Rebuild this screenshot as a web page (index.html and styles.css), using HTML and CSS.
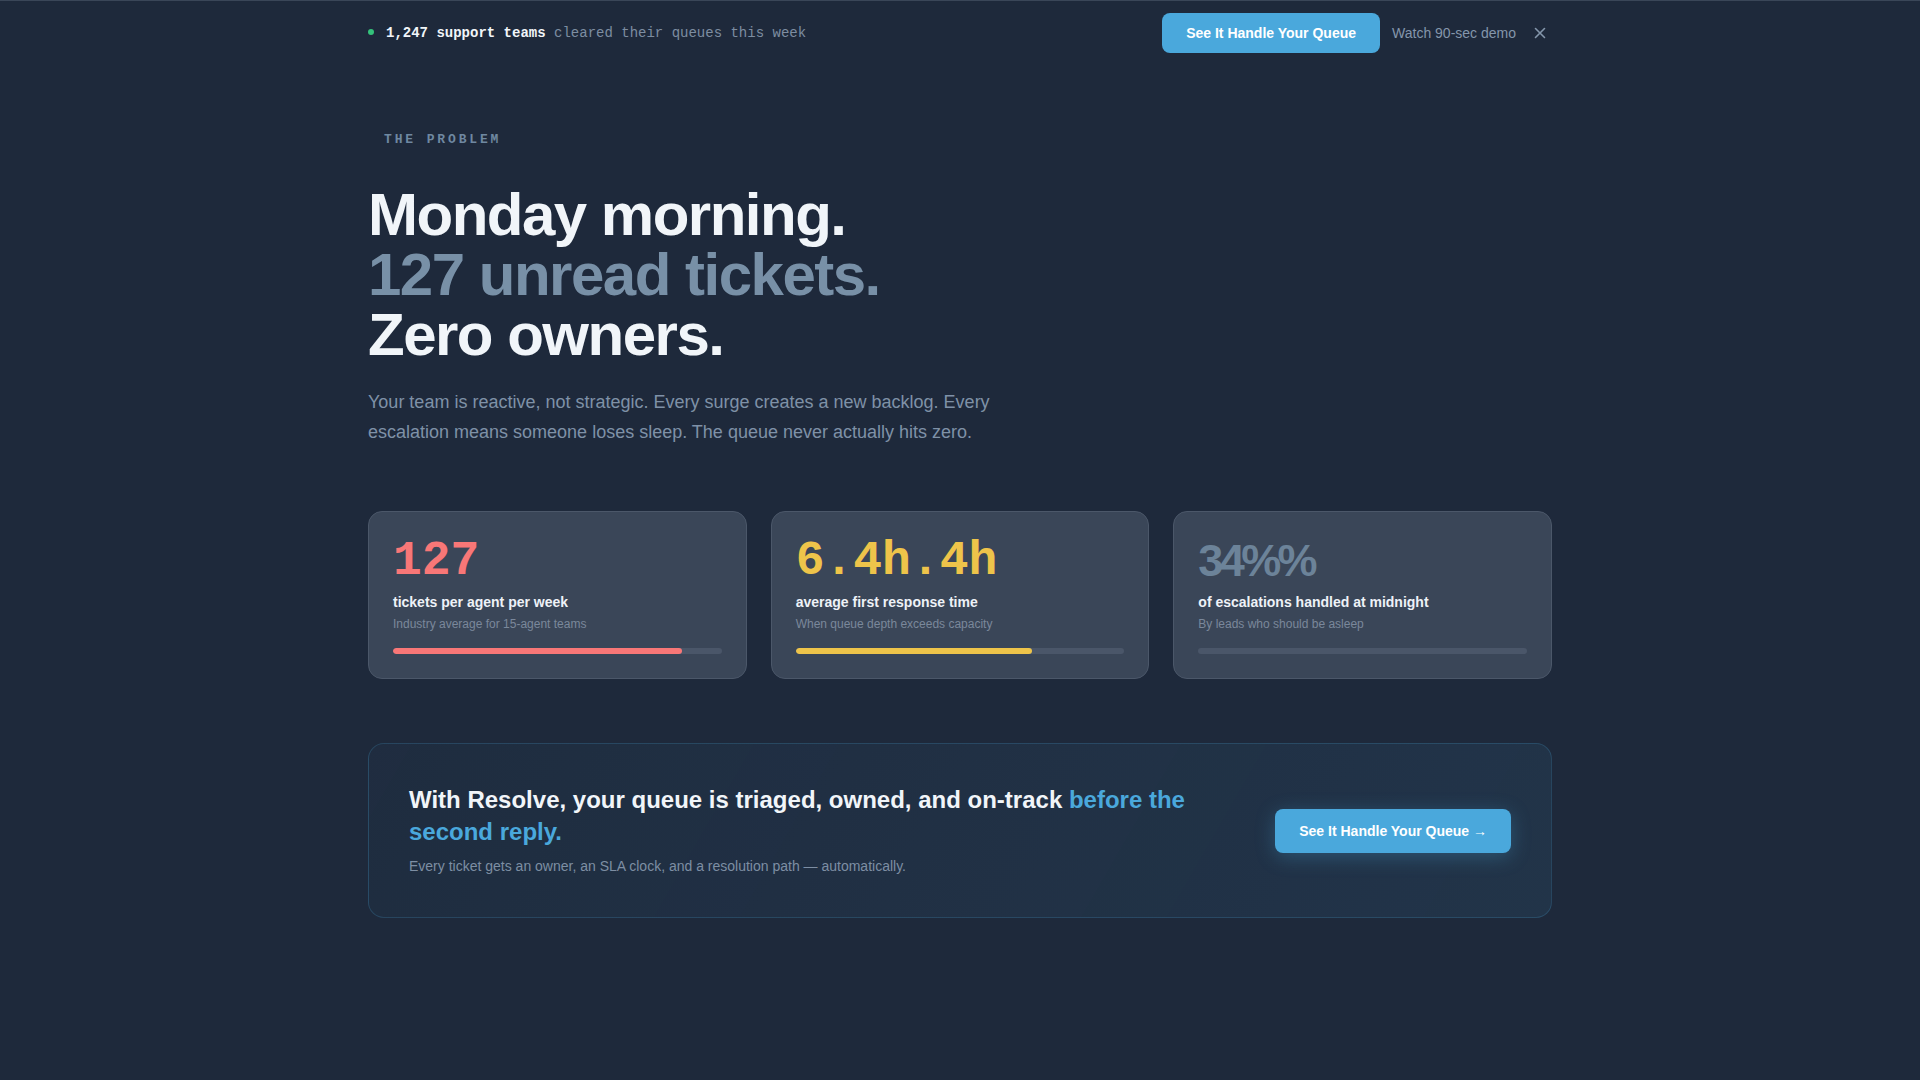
FILE: index.html
```html
<!DOCTYPE html>
<html lang="en">
<head>
    <meta charset="UTF-8">
    <title>Resolve - The Problem</title>
    <link rel="stylesheet" href="styles.css">
</head>
<body>

<div class="topbar">
    <div class="topbar-inner">
        <div class="proof"><span class="dot"></span><strong>1,247 support teams</strong> cleared their queues this week</div>
        <div class="topbar-actions">
            <a class="btn" href="#">See It Handle Your Queue</a>
            <a class="demo-link" href="#">Watch 90-sec demo</a>
            <button class="close" type="button" aria-label="Close">
                <svg width="12" height="12" viewBox="0 0 12 12">
                    <path d="M1.5 1.5 L10.5 10.5 M10.5 1.5 L1.5 10.5" stroke="currentColor" stroke-width="1.6" stroke-linecap="round"/>
                </svg>
            </button>
        </div>
    </div>
</div>

<section class="problem">
    <span class="eyebrow">The Problem</span>
    <h1 class="headline">
        Monday morning.<br>
        <span class="muted">127 unread tickets.</span><br>
        Zero owners.
    </h1>
    <p class="lead">Your team is reactive, not strategic. Every surge creates a new backlog. Every escalation means someone loses sleep. The queue never actually hits zero.</p>

    <div class="stats">
        <div class="stat">
            <div class="stat-value red">127</div>
            <div class="stat-label">tickets per agent per week</div>
            <div class="stat-note">Industry average for 15-agent teams</div>
            <div class="bar"><span class="fill red" style="width: 88%"></span></div>
        </div>
        <div class="stat">
            <div class="stat-value yellow">6.4h.4h</div>
            <div class="stat-label">average first response time</div>
            <div class="stat-note">When queue depth exceeds capacity</div>
            <div class="bar"><span class="fill yellow" style="width: 72%"></span></div>
        </div>
        <div class="stat">
            <div class="stat-value gray sans">34%%</div>
            <div class="stat-label">of escalations handled at midnight</div>
            <div class="stat-note">By leads who should be asleep</div>
            <div class="bar"><span class="fill gray" style="width: 0%"></span></div>
        </div>
    </div>

    <div class="cta">
        <div class="cta-text">
            <h2>With Resolve, your queue is triaged, owned, and on-track <span class="accent">before the second reply.</span></h2>
            <p>Every ticket gets an owner, an SLA clock, and a resolution path — automatically.</p>
        </div>
        <a class="btn btn-lg" href="#">See It Handle Your Queue →</a>
    </div>
</section>

</body>
</html>
```

FILE: styles.css
```css
* {
    box-sizing: border-box;
}

body {
    margin: 0;
    background: #1e293b;
    color: #f1f5f9;
    font-family: "Liberation Sans", Arial, sans-serif;
}

a {
    text-decoration: none;
}

/* top announcement bar */

.topbar {
    border-top: 1px solid #3a4658;
}

.topbar-inner {
    max-width: 1184px;
    height: 64px;
    margin: 0 auto;
    display: flex;
    align-items: center;
    justify-content: space-between;
}

.proof {
    font-family: "Liberation Mono", monospace;
    font-size: 14px;
    line-height: 20px;
    color: #7d8da1;
}

.proof strong {
    color: #f1f5f9;
}

.proof .dot {
    display: inline-block;
    vertical-align: middle;
    width: 6px;
    height: 6px;
    margin: -2px 12px 0 0;
    border-radius: 50%;
    background: #34c27b;
}

.topbar-actions {
    display: flex;
    align-items: center;
    gap: 12px;
}

.btn {
    display: inline-flex;
    align-items: center;
    height: 40px;
    padding: 0 24px;
    border-radius: 8px;
    background: #4aa8dc;
    color: #fff;
    font-size: 14px;
    font-weight: bold;
}

.demo-link {
    font-size: 14px;
    color: #8496ab;
}

.close {
    width: 24px;
    height: 24px;
    padding: 0;
    border: none;
    background: none;
    color: #8496ab;
    display: flex;
    align-items: center;
    justify-content: center;
    cursor: pointer;
}

/* problem section */

.problem {
    max-width: 1184px;
    margin: 0 auto;
    padding-top: 61px;
}

.eyebrow {
    display: inline-block;
    padding: 6px 16px;
    font-family: "Liberation Mono", monospace;
    font-size: 13px;
    line-height: 16px;
    font-weight: bold;
    letter-spacing: 0.22em;
    text-transform: uppercase;
    color: #6f88a1;
}

.headline {
    margin: 31px 0 0;
    font-size: 60px;
    line-height: 60px;
    letter-spacing: -0.025em;
    font-weight: bold;
    color: #f1f5f9;
}

.headline .muted {
    color: #7890a7;
}

.lead {
    max-width: 640px;
    margin: 23px 0 0;
    font-size: 18px;
    line-height: 1.65;
    color: #7f91a7;
}

/* stat cards */

.stats {
    display: grid;
    grid-template-columns: repeat(3, 1fr);
    gap: 24px;
    margin-top: 64px;
}

.stat {
    padding: 24px;
    border: 1px solid #4b5769;
    border-radius: 14px;
    background: #3a4658;
}

.stat-value {
    font-family: "Liberation Mono", monospace;
    font-size: 48px;
    line-height: 50px;
    font-weight: bold;
}

.stat-value.sans {
    font-family: "Liberation Sans", Arial, sans-serif;
    font-size: 45px;
    letter-spacing: -0.08em;
}

.stat-value.red {
    color: #f87777;
}

.stat-value.yellow {
    color: #eec44a;
}

.stat-value.gray {
    color: #6c8399;
}

.stat-label {
    margin-top: 6px;
    font-size: 14px;
    line-height: 20px;
    font-weight: bold;
    color: #eef2f7;
}

.stat-note {
    margin-top: 4px;
    font-size: 12px;
    line-height: 16px;
    color: #7a889b;
}

.bar {
    height: 6px;
    margin-top: 16px;
    border-radius: 3px;
    background: #4a5669;
    overflow: hidden;
}

.bar .fill {
    display: block;
    height: 100%;
    border-radius: 3px;
}

.bar .fill.red {
    background: #f87777;
}

.bar .fill.yellow {
    background: #eec44a;
}

.bar .fill.gray {
    background: #6c8399;
}

/* call to action */

.cta {
    display: flex;
    align-items: center;
    justify-content: space-between;
    gap: 48px;
    margin-top: 64px;
    padding: 40px;
    border: 1px solid rgba(74, 168, 220, 0.2);
    border-radius: 16px;
    background: linear-gradient(120deg, rgba(74, 168, 220, 0.03), rgba(74, 168, 220, 0.09));
}

.cta-text {
    max-width: 800px;
}

.cta h2 {
    margin: 0;
    font-size: 24px;
    line-height: 32px;
    font-weight: bold;
    color: #f1f5f9;
}

.cta h2 .accent {
    color: #4aa8dc;
}

.cta p {
    margin: 8px 0 0;
    font-size: 14px;
    line-height: 21px;
    color: #7d8ea3;
}

.btn-lg {
    flex-shrink: 0;
    height: 44px;
    box-shadow: 0 4px 20px rgba(74, 168, 220, 0.3);
}
```
